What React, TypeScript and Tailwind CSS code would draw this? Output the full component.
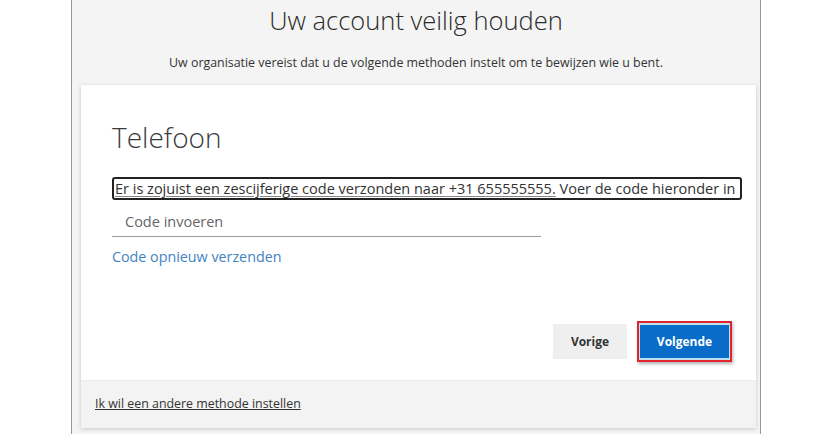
export default function App() {
  return (
    <div
      className="w-full h-[434px] bg-white flex justify-start overflow-hidden"
      style={{ fontFamily: '"Open Sans", "Noto Sans", sans-serif' }}
    >
      <div className="ml-[71px] w-[690px] h-full border-x border-[#9a9a9a] bg-[#f4f4f4] flex flex-col">
        {/* Header */}
        <h1 className="mt-[4px] h-[32px] leading-[32px] text-center text-[25.5px] font-light text-[#2b2b2b]">
          Uw account veilig houden
        </h1>
        <p className="mt-[18px] h-[17px] leading-[17px] text-center text-[12.4px] text-[#333]">
          Uw organisatie vereist dat u de volgende methoden instelt om te bewijzen wie u bent.
        </p>

        {/* Card */}
        <div className="mt-[14px] ml-[9px] w-[675px] bg-white shadow-[0_1px_4px_rgba(0,0,0,0.18)] flex flex-col">
          <div className="pl-[31px] pr-[14px] pt-[34px] h-[295px] flex flex-col">
            <h2 className="h-[36px] leading-[36px] text-[28px] font-light text-[#3a3a3a]">Telefoon</h2>

            <div className="mt-[22px] w-[630px] h-[23px] border-2 border-[#222] rounded-[3px] flex items-center">
              <span className="pl-[1px] text-[14.5px] leading-[18px] text-[#333] whitespace-nowrap">
                <span className="underline decoration-[#888] underline-offset-2">
                  Er is zojuist een zescijferige code verzonden naar +31 655555555.
                </span>{" "}
                Voer de code hieronder in
              </span>
            </div>

            <div className="mt-[12px] w-[429px] h-[25px] border-b border-[#9d9d9d] pl-[13px] text-[14.5px] leading-[20px] text-[#666]">
              Code invoeren
            </div>

            <a className="mt-[10px] h-[20px] leading-[20px] text-[14.3px] text-[#4283c2]">Code opnieuw verzenden</a>

            <div className="mt-auto mb-[18px] flex justify-end items-center gap-[10px] pr-[10px]">
              <button className="w-[74px] h-[35px] bg-[#efefef] text-[12px] font-bold text-[#333]">
                Vorige
              </button>
              <button className="w-[95px] h-[41px] border-2 border-[#e0262b] py-[2px] px-[1px] bg-[#bfe0ee] shadow-[1px_2px_3px_rgba(0,0,0,0.3)]">
                <span className="flex w-full h-full items-center justify-center bg-[#0a6cc9] text-[12px] font-bold text-white">
                  Volgende
                </span>
              </button>
            </div>
          </div>

          {/* Footer */}
          <div className="h-[48px] bg-[#f3f3f3] border-t border-[#ececec] pl-[14px] flex items-center">
            <a className="text-[12.4px] text-[#333] underline">Ik wil een andere methode instellen</a>
          </div>
        </div>
      </div>
    </div>
  );
}
